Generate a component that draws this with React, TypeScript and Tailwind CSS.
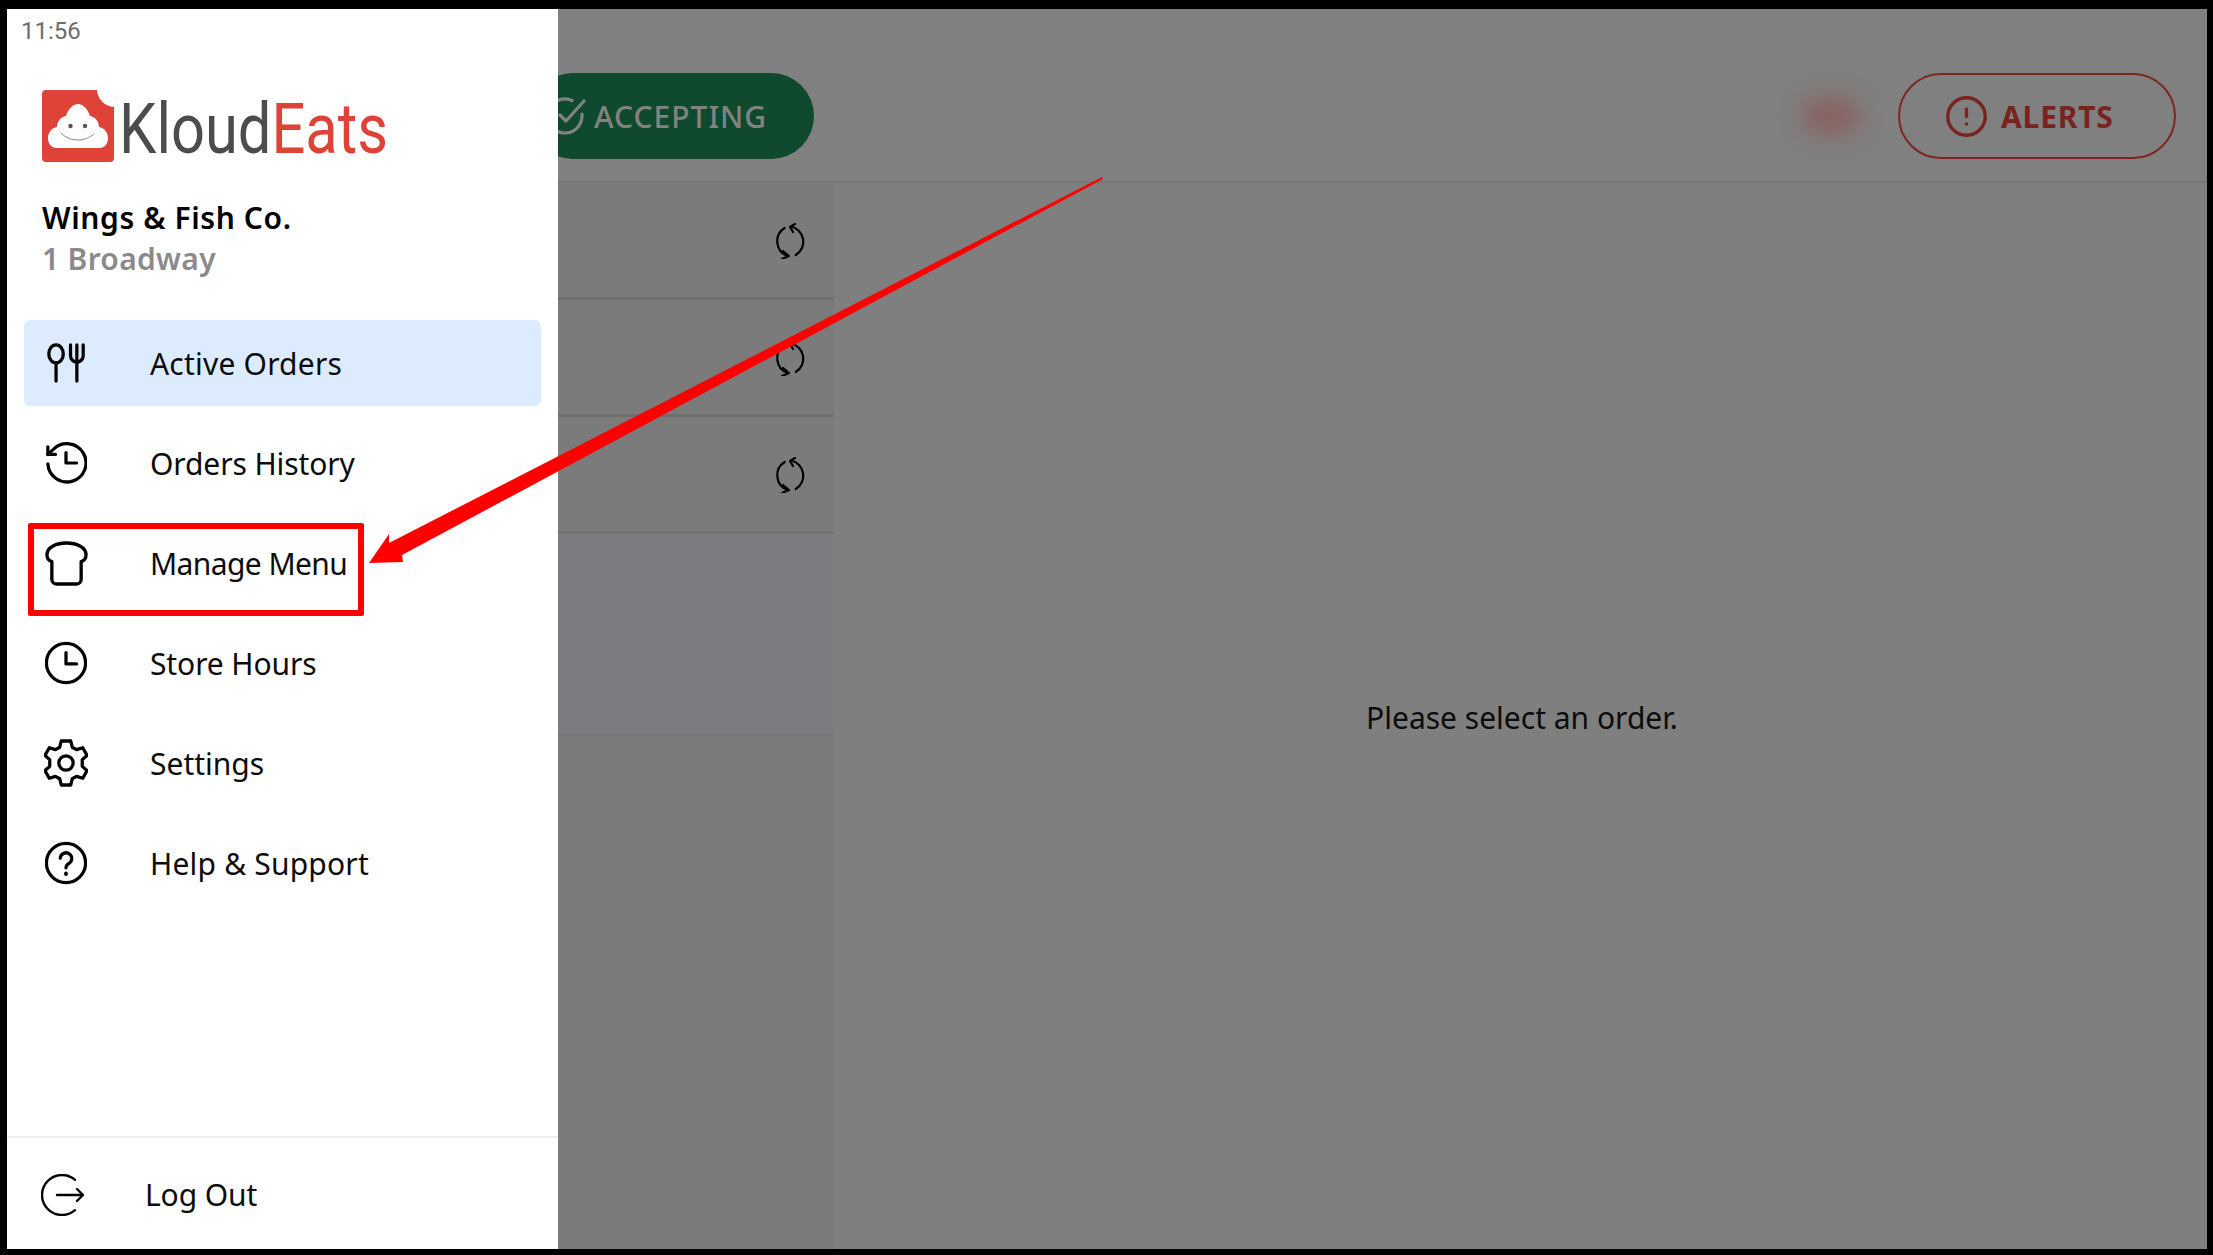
import { CircleAlert } from 'lucide-react';
import type { ReactNode } from 'react';

const ForkSpoon = () => (
    <svg viewBox="0 0 42 44" className="w-[38px] h-[40px]" fill="none" stroke="#000" strokeWidth="3.600" strokeLinecap="round" strokeLinejoin="round">
        <ellipse cx="10" cy="12" rx="8" ry="10" />
        <path d="M10 22v20" />
        <path d="M26 2v12a7 7 0 0 0 14 0V2" />
        <path d="M33 2v40" />
    </svg>
);

const HistoryIcon = () => (
    <svg viewBox="0 0 44 46" className="w-[42px] h-[44px]" fill="none" stroke="#000" strokeWidth="3.400" strokeLinecap="round" strokeLinejoin="round">
        <path d="M3 24a20 20 0 1 0 6-15.500L3 14" />
        <path d="M3 6v8h8" />
        <path d="M22 12v11h11" />
    </svg>
);

const ToastIcon = () => (
    <svg viewBox="0 0 44 46" className="w-[43px] h-[45px]" fill="none" stroke="#000" strokeWidth="3.400" strokeLinecap="round" strokeLinejoin="round">
        <path d="M7 21v18a5 5 0 0 0 5 5h20a5 5 0 0 0 5-5V21c3.500-1 5-4 5-7C42 6 32 2 22 2S2 6 2 14c0 3 1.500 6 5 7z" />
    </svg>
);

const ClockIcon = () => (
    <svg viewBox="0 0 44 46" className="w-[42px] h-[44px]" fill="none" stroke="#000" strokeWidth="3.400" strokeLinecap="round" strokeLinejoin="round">
        <circle cx="22" cy="23" r="20.500" />
        <path d="M22 12v12h11" />
    </svg>
);

const GearIcon = () => (
    <svg viewBox="0 0 46 50" className="w-[44px] h-[48px]" fill="none" stroke="#000" strokeWidth="3.400" strokeLinecap="round" strokeLinejoin="round">
        <circle cx="23" cy="25" r="7.500" />
        <path d="M18 2h10l1.500 6.500 4.500 2.500 6.500-2 4.500 8-5 4.500v7l5 4.500-4.500 8-6.500-2-4.500 2.500L28 48H18l-1.500-6.500-4.500-2.500-6.500 2-4.500-8 5-4.500v-7l-5-4.500 4.500-8 6.500 2 4.500-2.500z" />
    </svg>
);

const HelpIcon = () => (
    <svg viewBox="0 0 44 46" className="w-[42px] h-[44px]" fill="none" stroke="#000" strokeWidth="3.400" strokeLinecap="round" strokeLinejoin="round">
        <circle cx="22" cy="23" r="20.500" />
        <path d="M16 18a6 6 0 1 1 9 5.500c-2 1.200-3 2.200-3 4.500" />
        <path d="M22 34v.5" strokeWidth="4" />
    </svg>
);

const LogoutIcon = () => (
    <svg viewBox="0 0 43 42" className="w-[43px] h-[42px] shrink-0" fill="none" stroke="#000" strokeWidth="2.400" strokeLinecap="round" strokeLinejoin="round">
        <path d="M34 5.800A20 20 0 1 0 34 36.200" />
        <path d="M16 21h25" />
        <path d="M36 15l6 6-6 6" />
    </svg>
);

const SyncIcon = () => (
    <svg viewBox="0 0 34 36" className="w-[34px] h-[36px]" fill="none" stroke="#000" strokeWidth="2.200" strokeLinecap="round" strokeLinejoin="round">
        <path d="M11.700 5A15.500 15.500 0 0 0 15 33" />
        <path d="M22.700 32A15.500 15.500 0 0 0 18 3.500" />
        <path d="M10 28l6 5-7 3" />
        <path d="M22 1l-5 3 3 5" />
    </svg>
);

const CheckCircleIcon = () => (
    <svg viewBox="0 0 44 44" className="w-[44px] h-[44px] shrink-0" fill="none" stroke="#828282" strokeWidth="3.200" strokeLinecap="round" strokeLinejoin="round">
        <path d="M38 20v2a17 17 0 1 1-10-15.500" />
        <path d="M40 7L22 27l-6-6" />
    </svg>
);

const LogoMark = () => (
    <svg viewBox="0 0 72 72" className="w-[72px] h-[72px] shrink-0">
        <path d="M4 0h51a18 18 0 0 0 17 17V68a4 4 0 0 1-4 4H4a4 4 0 0 1-4-4V4a4 4 0 0 1 4-4z" fill="#df4338" />
        <path d="M15 58C8 58 6 52 6 48c0-6 4-10 9-11 0-6 4-10 9-11 2-7 7-12 12-12s10 5 12 12c5 1 9 5 9 11 5 1 9 5 9 11 0 4-2 10-9 10z" fill="#fff" />
        <circle cx="28.500" cy="36" r="2.200" fill="#555" />
        <circle cx="43" cy="36" r="2.200" fill="#555" />
        <path d="M19 43c5 5 11 7 17 7s11-2 16-6" fill="none" stroke="#777" strokeWidth="0.900" />
    </svg>
);

function NavRow({ icon, label, active, tracking }: { icon: ReactNode; label: string; active?: boolean; tracking: string }) {
    return (
        <div className={`flex items-center h-[86px] mb-[14px] rounded-md pl-[20px] ${active ? 'bg-[#dcecfe]' : ''}`}>
            <div className="w-[44px] flex justify-center shrink-0">{icon}</div>
            <span className={`ml-[62px] text-[30px] text-[#0c0c0c] ${tracking}`}>{label}</span>
        </div>
    );
}

function OrderRow({ thin }: { thin?: boolean }) {
    return (
        <div className={`h-[117px] flex items-center justify-end pt-[2px] pr-[27px] border-b-[3px] ${thin ? 'border-[#737373]' : 'border-[#6f6f6f]'}`}>
            <SyncIcon />
        </div>
    );
}

export default function App() {
    return (
        <div className="relative h-screen bg-black pt-[9px] pl-[7px] pr-[6px] pb-[6px] font-['Noto_Sans',sans-serif] overflow-hidden">
            <div className="flex h-full">
                {/* drawer */}
                <aside className="w-[551px] shrink-0 h-full bg-white flex flex-col">
                    <div className="font-['Roboto',sans-serif] text-[24px] leading-[44px] pl-[14px] text-[#6d6d6d]">11:56</div>
                    <div className="flex items-center mt-[37px] pl-[35px] h-[72px]">
                        <LogoMark />
                        <div className="ml-[5px] mt-[5px] font-['Roboto',sans-serif] text-[71px] leading-none scale-x-[0.84] origin-left whitespace-nowrap">
                            <span className="text-[#4c4c4c]">Kloud</span>
                            <span className="text-[#df4338]">Eats</span>
                        </div>
                    </div>
                    <div className="pl-[35px] mt-[35px] text-[30px] leading-[41px] font-semibold tracking-[0.6px] text-black">Wings &amp; Fish Co.</div>
                    <div className="pl-[35px] text-[30px] leading-[41px] font-semibold tracking-[0.3px] text-[#8a8a8a]">1 Broadway</div>
                    <nav className="mt-[41px] px-[17px] flex-1">
                        <NavRow active icon={<ForkSpoon />} label="Active Orders" tracking="tracking-[0.2px]" />
                        <NavRow icon={<HistoryIcon />} label="Orders History" tracking="tracking-[-0.1px]" />
                        <NavRow icon={<ToastIcon />} label="Manage Menu" tracking="tracking-[-0.6px]" />
                        <NavRow icon={<ClockIcon />} label="Store Hours" tracking="tracking-[-0.1px]" />
                        <NavRow icon={<GearIcon />} label="Settings" tracking="tracking-[0px]" />
                        <NavRow icon={<HelpIcon />} label="Help & Support" tracking="tracking-[0.2px]" />
                    </nav>
                    <div className="h-[113px] pt-[2px] border-t-2 border-[#eeeeee] flex items-center pl-[34px]">
                        <LogoutIcon />
                        <span className="ml-[61px] text-[30px] tracking-[-0.1px] text-[#0c0c0c]">Log Out</span>
                    </div>
                </aside>

                {/* dimmed page behind the drawer */}
                <main className="flex-1 min-w-0 h-full flex flex-col overflow-hidden bg-[#7f7f7f]">
                    <header className="h-[174px] shrink-0 bg-[#808080] border-b-2 border-[#777777] flex items-start justify-between pt-[64px] pr-[31px]">
                        <div className="-ml-[28px] h-[86px] w-[284px] rounded-full bg-[#0f4a2e] flex items-center pl-[14px] gap-[6px]">
                            <CheckCircleIcon />
                            <span className="text-[30px] font-medium tracking-[1px] text-[#828282]">ACCEPTING</span>
                        </div>
                        <div className="flex items-center gap-[37px]">
                            <div className="w-[60px] h-[38px] rounded-full bg-[#8b5a58] opacity-80 blur-[12px]" />
                            <div className="h-[86px] w-[278px] rounded-full border-2 border-[#7d2620] flex items-center pl-[44px] gap-[12px] text-[#7a231e]">
                                <CircleAlert size={45} strokeWidth={1.800} />
                                <span className="text-[30px] font-bold tracking-[0.8px]">ALERTS</span>
                            </div>
                        </div>
                    </header>
                    <div className="flex flex-1 min-h-0">
                        <div className="w-[276px] shrink-0 bg-[#7b7b7b]">
                            <OrderRow />
                            <OrderRow />
                            <OrderRow thin />
                            <div className="h-[202px] bg-[#7c7d80] border-b-2 border-[#757575]" />
                        </div>
                        <div className="flex-1 flex items-center justify-center pt-[2px] pl-[3px]">
                            <span className="text-[30px] tracking-[0px] text-[#0c0c0c]">Please select an order.</span>
                        </div>
                    </div>
                </main>
            </div>

            {/* annotation drawn on top of the screenshot */}
            <div className="absolute left-[28px] top-[523px] w-[336px] h-[93px] border-[6px] border-[#ff0000] rounded-[2px]" />
            <svg className="absolute inset-0 w-full h-full pointer-events-none" viewBox="0 0 2213 1255">
                <polygon points="1102,177 389,543 389,534 369,563 403,562 402,555 1103,179" fill="#ff0000" />
            </svg>
        </div>
    );
}
